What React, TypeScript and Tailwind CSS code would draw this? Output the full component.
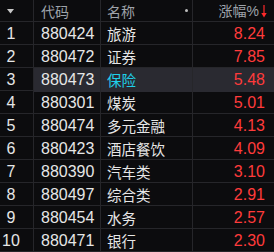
import React from 'react';

const rows = [
  { code: '880424', name: '旅游', pct: '8.24' },
  { code: '880472', name: '证券', pct: '7.85' },
  { code: '880473', name: '保险', pct: '5.48' },
  { code: '880301', name: '煤炭', pct: '5.01' },
  { code: '880474', name: '多元金融', pct: '4.13' },
  { code: '880423', name: '酒店餐饮', pct: '4.09' },
  { code: '880390', name: '汽车类', pct: '3.10' },
  { code: '880497', name: '综合类', pct: '2.91' },
  { code: '880454', name: '水务', pct: '2.57' },
  { code: '880471', name: '银行', pct: '2.30' },
];

const cjk = { fontFamily: '"Noto Sans CJK SC", sans-serif' };
const num = { fontFamily: '"Liberation Sans", Arial, sans-serif' };

export default function App() {
  const selected = 2;

  return (
    <div className="w-[274px] h-[252px] bg-[#0c0c0e] overflow-hidden text-[#e6e6e6]">
      {/* header */}
      <div className="grid grid-cols-[34px_67px_92px_1fr] h-[22px] border-b border-[#26262a] text-[14px] text-[#9ea3aa]" style={cjk}>
        <div className="border-r border-[#26262a] flex items-center pl-[7px]">
          <svg width="7" height="5" viewBox="0 0 7 5">
            <path d="M0 0 L7 0 L3.5 4.5 Z" fill="#c8c8c8" />
          </svg>
        </div>
        <div className="border-r border-[#26262a] flex items-center pl-[7px]">代码</div>
        <div className="border-r border-[#26262a] flex items-center pl-[6px] relative">
          名称
          <span className="absolute right-[4px] top-[9px] w-[3px] h-[3px] rounded-full bg-[#bdbdbd]" />
        </div>
        <div className="flex items-center justify-end pr-[7px] gap-[2px]">
          <span>涨幅<span style={num}>%</span></span>
          <svg width="6" height="13" viewBox="0 0 6 13">
            <path d="M3 0 V11" stroke="#ff2a2a" strokeWidth="1.2" />
            <path d="M0.3 8 L3 12.5 L5.7 8 Z" fill="#ff2a2a" />
          </svg>
        </div>
      </div>

      {/* rows */}
      {rows.map((r, i) => {
        const hl = i === selected;
        return (
          <div key={r.code} className="grid grid-cols-[34px_67px_92px_1fr] h-[23px] border-b border-[#26262a]">
            <div className="border-r border-[#26262a] flex items-center">
              <span className="w-[22px] text-center text-[16px]" style={num}>{i + 1}</span>
            </div>
            <div className={`border-r border-[#26262a] flex items-center pl-[7px] text-[16px] ${hl ? 'bg-[#2a2a31]' : ''}`} style={num}>
              {r.code}
            </div>
            <div className={`border-r border-[#26262a] flex items-center pl-[6px] text-[14.5px] ${hl ? 'bg-[#2a2a31] text-[#1fd0ea]' : ''}`} style={cjk}>
              {r.name}
            </div>
            <div className={`flex items-center justify-end pr-[9px] text-[16px] text-[#ff3b3b] ${hl ? 'bg-[#2a2a31]' : ''}`} style={num}>
              {r.pct}
            </div>
          </div>
        );
      })}
    </div>
  );
}
